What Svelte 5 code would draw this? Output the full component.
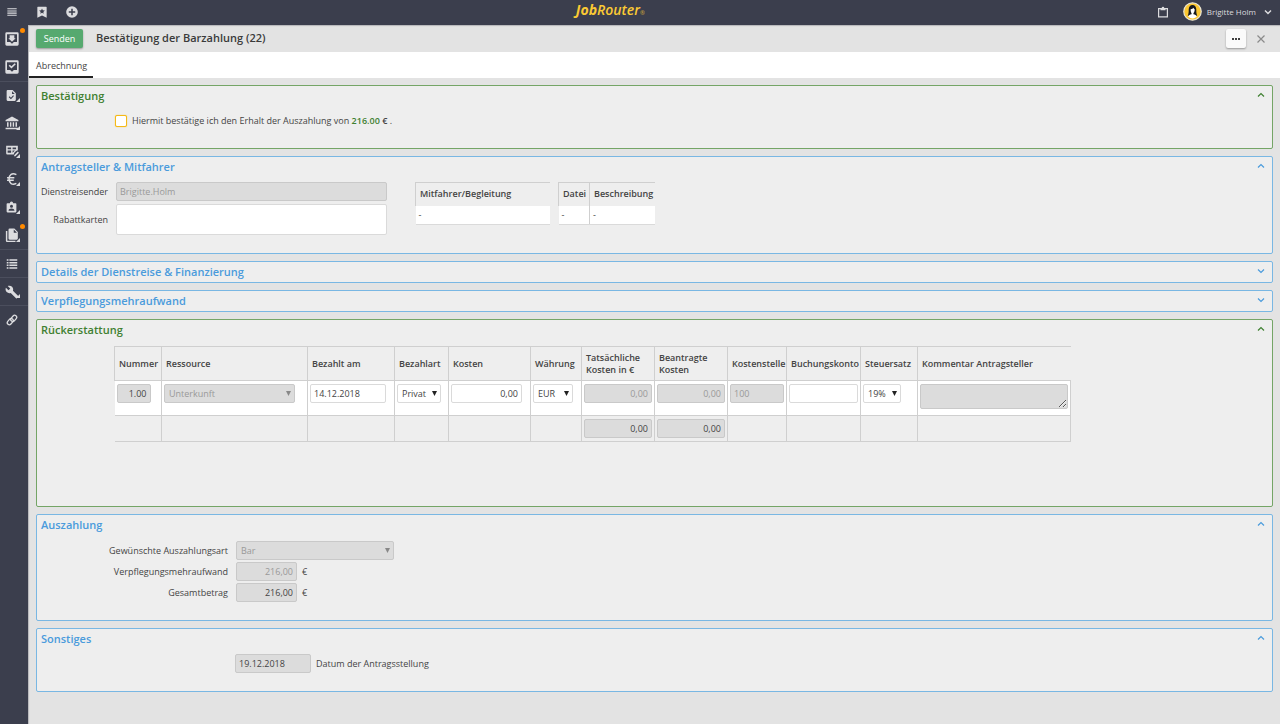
<script lang="ts">
  type NavItem = { icon: string; label: string; badge?: boolean; sub?: boolean; line?: boolean }

  const nav: NavItem[] = [
    { icon: 'inbox', label: 'Eingang', badge: true },
    { icon: 'done', label: 'Erledigt' },
    { icon: 'file', label: 'Dokumente', sub: true, line: true },
    { icon: 'bank', label: 'Bank', sub: true },
    { icon: 'grid', label: 'Tabellen', sub: true },
    { icon: 'euro', label: 'Finanzen', sub: true },
    { icon: 'badge', label: 'Personal', sub: true },
    { icon: 'copy', label: 'Akten', sub: true, badge: true },
    { icon: 'list', label: 'Liste', line: true },
    { icon: 'wrench', label: 'Werkzeuge', sub: true, line: true },
    { icon: 'link', label: 'Verknüpfung', line: true },
  ]

  const icons: Record<string, string> = {
    menu: 'M4 5.500h16v1.800H4zM4 9.300h16v1.800H4zM4 13h16v1.800H4zM4 16.800h16v1.800H4z',
    bookmark: 'M5 3h14a1 1 0 0 1 1 1v18l-8-4-8 4V4a1 1 0 0 1 1-1zm7 3-1.400 3.200-3.500.3 2.700 2.300-.8 3.400 3-1.800 3 1.800-.8-3.400 2.700-2.300-3.500-.3z',
    plus: 'M12 2a10 10 0 1 0 0 20 10 10 0 0 0 0-20zm5.500 11.300h-4.200v4.200h-2.600v-4.200H6.500v-2.600h4.200V6.500h2.600v4.200h4.200z',
    inbox: 'M4 2h16a2 2 0 0 1 2 2v16a2 2 0 0 1-2 2H4a2 2 0 0 1-2-2V4a2 2 0 0 1 2-2zm.5 3v11.500h4.700L12 19l2.800-2.500h4.700V5zM8.500 6.500h7V11h2L12 16 6.500 11h2z',
    done: 'M4 2h16a2 2 0 0 1 2 2v16a2 2 0 0 1-2 2H4a2 2 0 0 1-2-2V4a2 2 0 0 1 2-2zm.5 3v11.500h4.700L12 19l2.800-2.500h4.700V5zM7 10.200l1.700-1.700 2.500 2.500 4.800-4.800 1.700 1.700-6.500 6.500z',
    file: 'M5 2h9l6 6v12a2 2 0 0 1-2 2H5a2 2 0 0 1-2-2V4a2 2 0 0 1 2-2zm8 2v5h5zM7 15l4 4 5.500-6-1.500-1.400-4 4.500L8.500 13.500z',
    bank: 'M12 1 1 7v2h22V7zM3.500 10.500h2.600v8H3.500zM8.500 10.500h2.400v8H8.500zM13.200 10.500h2.400v8h-2.400zM18 10.500h2.600v8H18zM1 20h22v2.500H1z',
    grid: 'M2 3h20v7.500L19 12l-3 3-1 3H4a2 2 0 0 1-2-2zm2.500 3v3h6V6zm8.500 0v3h6V6zM4.500 11v4h6v-4zm8.500 0v4l4-4zM16 19l6-6 1.800 1.800-6 6L15.500 21z',
    badge: 'M4.500 4H9a3 3 0 0 1 6 0h4.500A1.500 1.500 0 0 1 21 5.500v14a1.500 1.500 0 0 1-1.500 1.500h-15A1.500 1.500 0 0 1 3 19.500v-14A1.500 1.500 0 0 1 4.500 4zM12 7a2.800 2.800 0 1 0 0 5.600A2.800 2.800 0 0 0 12 7zm0 7c-3 0-5.500 1.200-5.500 4h11c0-2.800-2.500-4-5.500-4z',
    copy: 'M8 1h8l6 6v11a2 2 0 0 1-2 2H8a2 2 0 0 1-2-2V3a2 2 0 0 1 2-2zm7 1.500V8h5.500zM1.500 5H4v17h14v2H3.500a2 2 0 0 1-2-2z',
    list: 'M3 4h3v2.500H3zM7.500 4H21v2.500H7.500zM3 8.500h3V11H3zM7.500 8.500H21V11H7.500zM3 13h3v2.500H3zM7.500 13H21v2.500H7.500zM3 17.500h3V20H3zM7.500 17.500H21V20H7.500z',
    wrench: 'm22.700 19-9.100-9.100c.9-2.300.4-5-1.500-6.900-2-2-5-2.400-7.400-1.300L9 6 6 9 1.600 4.700C.4 7.100.9 10.100 2.900 12.100c1.900 1.900 4.600 2.400 6.900 1.500l9.100 9.100c.4.4 1 .4 1.400 0l2.300-2.300c.5-.4.5-1.100.1-1.400z',
  }

  const panelsOpen = $state({
    confirm: true,
    applicant: true,
    details: false,
    meals: false,
    refund: true,
    payout: true,
    other: true,
  })

  type PanelKey = keyof typeof panelsOpen

  const columns = [
    { label: 'Nummer', width: 47 },
    { label: 'Ressource', width: 146 },
    { label: 'Bezahlt am', width: 87 },
    { label: 'Bezahlart', width: 54 },
    { label: 'Kosten', width: 82 },
    { label: 'Währung', width: 51 },
    { label: 'Tatsächliche Kosten in €', width: 73 },
    { label: 'Beantragte Kosten', width: 73 },
    { label: 'Kostenstelle', width: 59 },
    { label: 'Buchungskonto', width: 74 },
    { label: 'Steuersatz', width: 57 },
    { label: 'Kommentar Antragsteller', width: 153 },
  ]
</script>

{#snippet icon(name: string)}
  <svg class="icon" viewBox="0 0 24 24" aria-hidden="true">
    {#if name === 'link'}
      <g fill="none" stroke="currentColor" stroke-width="2.200" transform="rotate(-50 12 12)">
        <rect x="2" y="8" width="12" height="7" rx="3.500" />
        <rect x="10" y="9" width="12" height="7" rx="3.500" />
      </g>
    {:else if name === 'euro'}
      <path
        fill="none"
        stroke="currentColor"
        stroke-width="2.500"
        d="M19.500 4.500C12 .5 7 5 7 12s5 11.500 12.500 7.500M3.500 10H16M3.500 14H15"
      />
    {:else}
      <path fill="currentColor" fill-rule="evenodd" d={icons[name]} />
    {/if}
  </svg>
{/snippet}

{#snippet heading(key: PanelKey, title: string)}
  <header class="panel-head">
    <h2>{title}</h2>
    <button
      class="toggle"
      aria-label={title}
      aria-expanded={panelsOpen[key]}
      onclick={() => (panelsOpen[key] = !panelsOpen[key])}
    >
      <svg viewBox="0 0 8 6" aria-hidden="true">
        <path d={panelsOpen[key] ? 'M1 4.500 4 1.500l3 3' : 'M1 1.500l3 3 3-3'} />
      </svg>
    </button>
  </header>
{/snippet}

{#snippet dropdown(value: string, label: string, kind: string, disabled = false, id = '')}
  <span class="select {kind}" class:disabled>
    <select aria-label={label} id={id || undefined} {disabled}><option>{value}</option></select>
    <svg viewBox="0 0 5 5" aria-hidden="true"><path d="M0 0h5L2.500 5z" /></svg>
  </span>
{/snippet}

<div class="app">
  <div class="topbar">
    <div class="top-left">
      <button aria-label="Menü">{@render icon('menu')}</button>
      <button aria-label="Lesezeichen">{@render icon('bookmark')}</button>
      <button aria-label="Neu">{@render icon('plus')}</button>
    </div>
    <div class="logo"><b>Job</b>Router<small>®</small></div>
    <div class="top-right">
      <button aria-label="Zwischenablage">
        <svg class="clipboard" viewBox="0 0 12 12" aria-hidden="true">
          <path fill="none" stroke="currentColor" stroke-width="1.200" d="M1.600 2.600h8.800v8.300H1.600z" />
          <path fill="currentColor" d="M3.500 2h1.200a1.300 1.300 0 0 1 2.600 0h1.200v2.300h-5z" />
        </svg>
      </button>
      <button class="user">
        <svg class="avatar" viewBox="0 0 20 20" aria-hidden="true">
          <circle cx="10" cy="10" r="9.200" fill="#fbc62f" stroke="#e8e3d2" stroke-width="1.300" />
          <path fill="#17191f" d="M5 14.500c1-2 1-4 1-6.500 0-3 1.600-4.800 4-4.800S14 5 14 8c0 2.500 0 4.500 1 6.500z" />
          <path fill="#fff" d="M8 7.500c1.500 0 2.500-.7 3-1.500.3.800.8 1.300 1.300 1.500 0 2-.4 3.300-1.300 4v1.300c1.700.4 3 1 3.500 2.700a7 7 0 0 1-9 0c.5-1.700 1.800-2.300 3.500-2.700v-1.300c-.7-.7-1-2-1-4z" />
        </svg>
        <span>Brigitte Holm</span>
        <svg class="chevron" viewBox="0 0 8 6" aria-hidden="true"><path d="M1 1.500l3 3 3-3" /></svg>
      </button>
    </div>
  </div>

  <nav class="sidebar">
    {#each nav as item}
      <a href="#{item.icon}" class={item.icon} aria-label={item.label} class:line={item.line}>
        {@render icon(item.icon)}
        {#if item.sub}<span class="corner"></span>{/if}
        {#if item.badge}<span class="dot"></span>{/if}
      </a>
    {/each}
  </nav>

  <main>
    <div class="titlebar">
      <button class="send">Senden</button>
      <h1>Bestätigung der Barzahlung (22)</h1>
      <button class="more" aria-label="Mehr">
        <svg viewBox="0 0 10 4" aria-hidden="true">
          <circle cx="2" cy="2" r="1" /><circle cx="5" cy="2" r="1" /><circle cx="8" cy="2" r="1" />
        </svg>
      </button>
      <button class="close" aria-label="Schließen">
        <svg viewBox="0 0 8 8" aria-hidden="true"><path d="M.5.5l7 7M7.500.5l-7 7" /></svg>
      </button>
    </div>
    <div class="tabs"><button class="tab">Abrechnung</button></div>

    <div class="content">
      <section class="panel green confirm">
        {@render heading('confirm', 'Bestätigung')}
        {#if panelsOpen.confirm}
          <label class="check">
            <input type="checkbox" />
            <span>Hiermit bestätige ich den Erhalt der Auszahlung von <b>216.00</b> <strong>€</strong> .</span>
          </label>
        {/if}
      </section>

      <section class="panel applicant">
        {@render heading('applicant', 'Antragsteller & Mitfahrer')}
        {#if panelsOpen.applicant}
          <div class="applicant-body">
            <div class="fields">
              <label for="traveller">Dienstreisender</label>
              <input id="traveller" value="Brigitte.Holm" disabled />
              <label for="cards">Rabattkarten</label>
              <textarea id="cards"></textarea>
            </div>
            <table class="small riders">
              <thead><tr><th>Mitfahrer/Begleitung</th></tr></thead>
              <tbody><tr><td>-</td></tr></tbody>
            </table>
            <table class="small files">
              <thead><tr><th>Datei</th><th>Beschreibung</th></tr></thead>
              <tbody><tr><td>-</td><td>-</td></tr></tbody>
            </table>
          </div>
        {/if}
      </section>

      <section class="panel">{@render heading('details', 'Details der Dienstreise & Finanzierung')}</section>
      <section class="panel">{@render heading('meals', 'Verpflegungsmehraufwand')}</section>

      <section class="panel green refund">
        {@render heading('refund', 'Rückerstattung')}
        {#if panelsOpen.refund}
          <table class="costs">
            <colgroup>
              {#each columns as col}<col style="width: {col.width}px" />{/each}
            </colgroup>
            <thead>
              <tr>{#each columns as col}<th>{col.label}</th>{/each}</tr>
            </thead>
            <tbody>
              <tr>
                <td><input class="num w-number" aria-label="Nummer" value="1.00" readonly /></td>
                <td>{@render dropdown('Unterkunft', 'Ressource', 'w-resource', true)}</td>
                <td><input class="w-date" aria-label="Bezahlt am" value="14.12.2018" /></td>
                <td>{@render dropdown('Privat', 'Bezahlart', 'w-type')}</td>
                <td><input class="num w-cost" aria-label="Kosten" value="0,00" /></td>
                <td>{@render dropdown('EUR', 'Währung', 'w-currency')}</td>
                <td><input class="num" aria-label="Tatsächliche Kosten in €" value="0,00" disabled /></td>
                <td><input class="num" aria-label="Beantragte Kosten" value="0,00" disabled /></td>
                <td><input aria-label="Kostenstelle" value="100" disabled /></td>
                <td><input aria-label="Buchungskonto" /></td>
                <td>{@render dropdown('19%', 'Steuersatz', 'w-tax')}</td>
                <td><textarea aria-label="Kommentar Antragsteller" readonly></textarea></td>
              </tr>
            </tbody>
            <tfoot>
              <tr>
                {#each columns as col, i}
                  <td>
                    {#if i === 6 || i === 7}
                      <input class="num" aria-label="Summe {col.label}" value="0,00" readonly />
                    {/if}
                  </td>
                {/each}
              </tr>
            </tfoot>
          </table>
        {/if}
      </section>

      <section class="panel payout">
        {@render heading('payout', 'Auszahlung')}
        {#if panelsOpen.payout}
          <div class="payout-body">
            <label for="kind">Gewünschte Auszahlungsart</label>
            {@render dropdown('Bar', 'Gewünschte Auszahlungsart', 'w-payout', true, 'kind')}
            <label for="meal-sum">Verpflegungsmehraufwand</label>
            <div class="amount"><input class="num" id="meal-sum" value="216,00" disabled /><span>€</span></div>
            <label for="total">Gesamtbetrag</label>
            <div class="amount"><input class="num" id="total" value="216,00" readonly /><span>€</span></div>
          </div>
        {/if}
      </section>

      <section class="panel other">
        {@render heading('other', 'Sonstiges')}
        {#if panelsOpen.other}
          <div class="date-row">
            <input class="w-date" id="applied" value="19.12.2018" readonly />
            <label for="applied">Datum der Antragsstellung</label>
          </div>
        {/if}
      </section>
    </div>
  </main>
</div>

<style>
  :global(body) {
    background: #e3e3e3;
  }

  .app, .app * { box-sizing: border-box; }
  .app {
    display: grid;
    grid-template: 25px 1fr / 28px 1fr;
    min-height: 100vh;
    font: 9px/12px 'Open Sans', sans-serif;
    color: #444;
  }

  button, input, select, textarea {
    margin: 0;
    font: inherit;
    color: inherit;
  }
  button {
    display: flex;
    align-items: center;
    padding: 0;
    border: 0;
    background: none;
    cursor: pointer;
  }
  svg { display: block; }
  .icon { width: 14px; height: 14px; }

  /* Top bar */
  .topbar {
    grid-column: 1 / -1;
    display: flex;
    align-items: center;
    justify-content: space-between;
    padding: 0 8px 2px 4px;
    background: #3b3e4d;
    color: #dcdcdf;
  }
  .top-left { display: flex; gap: 14px; }
  .top-left .icon { width: 16px; }
  .top-right {
    display: flex;
    align-items: center;
    gap: 14px;
  }
  .logo {
    margin-right: 16px;
    font-size: 14px;
    line-height: 18px;
    font-style: italic;
    font-weight: 600;
    color: #fbca34;
  }
  .logo b { font-weight: 700; }
  .logo small { font-size: 6px; opacity: 0.7; }
  .clipboard { width: 12px; height: 12px; }
  .user { gap: 5px; font-size: 8px; }
  .avatar { width: 19px; height: 19px; }
  .chevron {
    width: 8px;
    height: 6px;
    margin-left: 3px;
    fill: none;
    stroke: currentColor;
    stroke-width: 1.5;
  }

  /* Sidebar */
  .sidebar { background: #3b3e4d; }
  .sidebar a {
    position: relative;
    display: flex;
    align-items: center;
    height: 28px;
    padding-left: 5px;
    color: #dcdcdf;
  }
  .sidebar .inbox, .sidebar .done { padding-left: 4px; }
  .inbox .icon, .done .icon { width: 16px; height: 16px; }
  .file .icon, .badge .icon { width: 13px; height: 13px; }
  .sidebar .line { border-top: 1px solid #4b4e5d; }
  .corner {
    position: absolute;
    right: 8px;
    bottom: 7px;
    border: 2px solid;
    border-color: transparent #dcdcdf #dcdcdf transparent;
  }
  .dot {
    position: absolute;
    top: 3px;
    right: 3px;
    width: 5px;
    height: 5px;
    border-radius: 50%;
    background: #ff8a00;
  }

  main {
    min-width: 0;
    box-shadow: inset 1px 1px 1px #b5b5b8;
    background: #e3e3e3;
  }

  .titlebar {
    display: flex;
    align-items: center;
    height: 27px;
    padding: 0 15px 0 8px;
  }
  .send {
    justify-content: center;
    width: 47px;
    height: 19px;
    border-radius: 2px;
    background: #56a96f;
    color: #fff;
    box-shadow: 0 1px 2px #0005;
  }
  h1 {
    flex: 1;
    margin: 0 0 0 13px;
    padding-bottom: 1px;
    font-size: 11px;
    line-height: 16px;
    font-weight: 600;
    color: #3a3a3a;
  }
  .more {
    justify-content: center;
    width: 20px;
    height: 19px;
    border-radius: 2px;
    background: #fafafa;
    box-shadow: 0 1px 2px #0005;
  }
  .more svg { width: 10px; height: 4px; }
  .close { margin-left: 11px; }
  .close svg {
    width: 8px;
    height: 8px;
    stroke: #8a8a8a;
    stroke-width: 1.2;
  }

  .tabs {
    display: flex;
    height: 26px;
    margin-left: 1px;
    background: #fff;
  }
  .tab {
    padding: 3px 6px 0 7px;
    border-bottom: 2px solid #222;
  }

  /* Panels */
  .content {
    display: flex;
    flex-direction: column;
    gap: 7px;
    padding: 7px 7px 32px 8px;
  }
  .panel {
    --accent: #4a9bdc;
    border: 1px solid #79b7e3;
    border-radius: 2px;
    background: #eee;
  }
  .green {
    --accent: #3f8031;
    border-color: #74a566;
  }
  .panel-head {
    display: flex;
    justify-content: space-between;
    height: 20px;
    padding: 1px 7px 0 4px;
    color: var(--accent);
  }
  h2 {
    margin: 0;
    font-size: 11px;
    line-height: 18px;
    font-weight: 600;
  }
  .toggle { height: 16px; }
  .toggle svg {
    width: 8px;
    height: 6px;
    fill: none;
    stroke: var(--accent);
    stroke-width: 1.2;
  }
  .confirm { padding-bottom: 21px; }
  .applicant { padding-bottom: 18px; }
  .refund { padding-bottom: 64px; }
  .payout { padding-bottom: 18px; }
  .other { padding-bottom: 18px; }

  /* Form fields */
  input, textarea, select {
    width: 100%;
    height: 19px;
    padding: 0 3px;
    border: 1px solid #dadada;
    border-radius: 2px;
    background: #fff;
    outline: 0;
  }
  input, textarea { display: block; }
  input:disabled, textarea:disabled, select:disabled, input:read-only:not([type='checkbox']), textarea:read-only {
    border-color: #c9c9c9;
    background: #dcdcdc;
  }
  input:disabled, select:disabled { color: #999; opacity: 1; }
  .num { text-align: right; }

  .select { display: grid; align-items: center; }
  .select select {
    grid-area: 1 / 1;
    appearance: none;
    padding: 0 4px;
  }
  .select svg {
    grid-area: 1 / 1;
    justify-self: end;
    width: 5px;
    height: 5px;
    margin-right: 4px;
    fill: #222;
    pointer-events: none;
  }
  .disabled svg { fill: #888; }

  .w-number { width: 34px; }
  .w-resource { width: 131px; }
  .w-date { width: 76px; }
  .w-type { width: 44px; }
  .w-cost { width: 71px; }
  .w-currency { width: 40px; }
  .w-tax { width: 38px; }
  .w-payout { width: 158px; }

  .check {
    display: flex;
    align-items: center;
    gap: 5px;
    width: max-content;
    padding: 9px 0 0 78px;
  }
  .check input {
    appearance: none;
    width: 12px;
    height: 12px;
    border: 1px solid #f5b916;
    box-shadow: 0 0 1px #f5b916;
  }
  .check input:checked { background: #f5b916; }
  .check b { font-weight: 600; color: #3f8031; }
  .check strong { font-weight: 600; }

  .applicant-body {
    display: flex;
    align-items: flex-start;
    padding-top: 5px;
  }
  .fields {
    display: grid;
    grid-template-columns: 71px 271px;
    align-items: center;
    gap: 3px 8px;
    margin-right: 28px;
  }
  .fields label, .payout-body label { text-align: right; }
  .fields textarea { height: 31px; resize: none; }

  table {
    border-collapse: collapse;
    table-layout: fixed;
  }
  th {
    text-align: left;
    font-weight: 600;
    line-height: 12px;
  }
  .small { margin-right: 8px; }
  .small th {
    height: 23px;
    padding: 0 4px;
    border-top: 1px solid #cfcfcf;
    border-left: 1px solid #cfcfcf;
  }
  .small td {
    height: 19px;
    padding: 0 3px;
    border-bottom: 1px solid #dadada;
    background: #fff;
  }
  .small td + td { border-left: 1px solid #cfcfcf; }
  .riders { width: 135px; }
  .files { width: 97px; }
  .files th:first-child { width: 31px; }

  .costs { width: 956px; margin: 6px 0 0 77px; }
  .costs th {
    height: 34px;
    padding: 0 0 0 4px;
    border: 1px solid #cfcfcf;
    border-right: 0;
  }
  .costs td {
    height: 35px;
    padding: 3px 2px 0 2px;
    vertical-align: top;
    border: 1px solid #cfcfcf;
  }
  .costs td:first-child { border-left: 0; }
  .costs tbody { background: #fff; }
  .costs tfoot td { height: 26px; border-top-color: #b9b9b9; }
  .costs textarea { height: 25px; }

  .payout-body {
    display: grid;
    grid-template-columns: 186px 158px;
    align-items: center;
    gap: 2px 8px;
    padding: 6px 0 0 5px;
  }
  .amount { display: flex; align-items: center; gap: 5px; }
  .amount input { width: 61px; }
  .date-row {
    display: flex;
    align-items: center;
    gap: 5px;
    padding: 5px 0 0 198px;
  }
</style>
